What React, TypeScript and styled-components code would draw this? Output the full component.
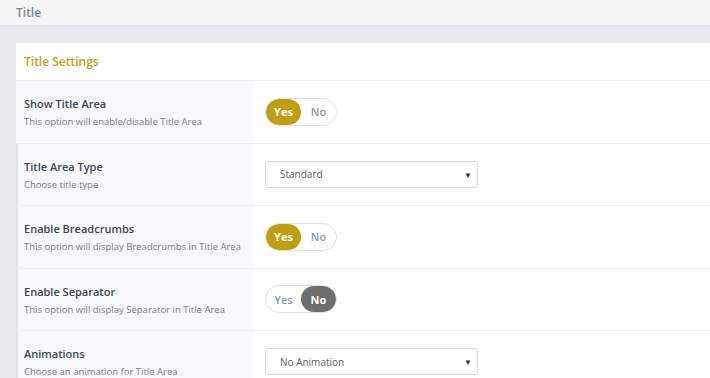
import React from 'react'
import styled, { createGlobalStyle } from 'styled-components'

const GlobalStyle = createGlobalStyle`
  html, body {
    margin: 0;
    padding: 0;
    background: #e9ecef;
    font-family: "Open Sans", "Noto Sans", sans-serif;
    overflow: hidden;
  }
`

const Page = styled.div`
  width: 710px;
  height: 378px;
  background: #e9ecef;
  display: flex;
  flex-direction: column;
`

const TopBar = styled.div`
  height: 25px;
  background: #f4f6f5;
  border-bottom: 1px solid #dfe3e6;
  display: flex;
  align-items: center;
  padding-left: 16px;
  font-size: 12px;
  font-weight: 600;
  color: #7a8892;
`

const Content = styled.div`
  padding: 17px 0 0 16px;
  flex: 1;
  overflow: hidden;
`

const Card = styled.div`
  background: #fff;
  height: 100%;
`

const CardHeader = styled.div`
  height: 37px;
  display: flex;
  align-items: center;
  padding-left: 8px;
  border-bottom: 1px solid #eff1f3;
  font-size: 12px;
  font-weight: 600;
  color: #c29f13;
`

const Row = styled.div`
  display: grid;
  grid-template-columns: 237px 1fr;
  height: 62.5px;
  box-sizing: border-box;
  border-bottom: 1px solid #eceef0;
`

const LabelCell = styled.div<{ $marked?: boolean }>`
  background: #f8f9fa;
  border-left: 2px solid ${p => (p.$marked ? '#dfe3e8' : 'transparent')};
  padding: 15px 0 0 6px;
  display: flex;
  flex-direction: column;
`

const LabelTitle = styled.div`
  font-size: 11px;
  font-weight: 600;
  color: #3d4650;
  line-height: 16px;
`

const LabelDesc = styled.div`
  font-size: 9.5px;
  color: #737c84;
  line-height: 16px;
  margin-top: 2px;
`

const ControlCell = styled.div`
  display: flex;
  align-items: center;
  padding-left: 12px;
`

const Toggle = styled.div`
  display: flex;
  width: 72px;
  height: 28px;
  box-sizing: border-box;
  border: 1px solid #e1e4e7;
  border-radius: 14px;
  overflow: hidden;
`

const ToggleOption = styled.div<{ $active?: boolean; $tone?: 'gold' | 'gray' }>`
  flex: 1;
  display: flex;
  align-items: center;
  justify-content: center;
  border-radius: 14px;
  font-size: 11px;
  color: ${p => (p.$active ? '#fff' : '#8a9aa8')};
  background: ${p => (!p.$active ? 'transparent' : p.$tone === 'gray' ? '#6e6e6e' : '#bf9f10')};
  font-weight: ${p => (p.$active ? 700 : 600)};
`

const Select = styled.div`
  width: 213px;
  height: 27px;
  box-sizing: border-box;
  border: 1px solid #dcdfe2;
  border-radius: 3px;
  display: flex;
  align-items: center;
  justify-content: space-between;
  padding: 0 5px 0 14px;
  font-size: 10px;
  color: #575d63;
`

const Caret = styled.span`
  font-size: 8px;
  color: #333;
`

type Setting = {
  title: string
  desc: string
  kind: 'toggle' | 'select'
  value: string
}

const settings: Setting[] = [
  { title: 'Show Title Area', desc: 'This option will enable/disable Title Area', kind: 'toggle', value: 'Yes' },
  { title: 'Title Area Type', desc: 'Choose title type', kind: 'select', value: 'Standard' },
  { title: 'Enable Breadcrumbs', desc: 'This option will display Breadcrumbs in Title Area', kind: 'toggle', value: 'Yes' },
  { title: 'Enable Separator', desc: 'This option will display Separator in Title Area', kind: 'toggle', value: 'No' },
  { title: 'Animations', desc: 'Choose an animation for Title Area', kind: 'select', value: 'No Animation' },
]

const App: React.FC = () => {
  return (
    <>
      <GlobalStyle />
      <Page>
        <TopBar>Title</TopBar>
        <Content>
          <Card>
            <CardHeader>Title Settings</CardHeader>
            {settings.map((s, i) => (
              <Row key={s.title}>
                <LabelCell $marked={i > 0}>
                  <LabelTitle>{s.title}</LabelTitle>
                  <LabelDesc>{s.desc}</LabelDesc>
                </LabelCell>
                <ControlCell>
                  {s.kind === 'toggle' ? (
                    <Toggle>
                      <ToggleOption $active={s.value === 'Yes'}>Yes</ToggleOption>
                      <ToggleOption $active={s.value === 'No'} $tone="gray">No</ToggleOption>
                    </Toggle>
                  ) : (
                    <Select>
                      {s.value}
                      <Caret>▼</Caret>
                    </Select>
                  )}
                </ControlCell>
              </Row>
            ))}
          </Card>
        </Content>
      </Page>
    </>
  )
}

export default App
